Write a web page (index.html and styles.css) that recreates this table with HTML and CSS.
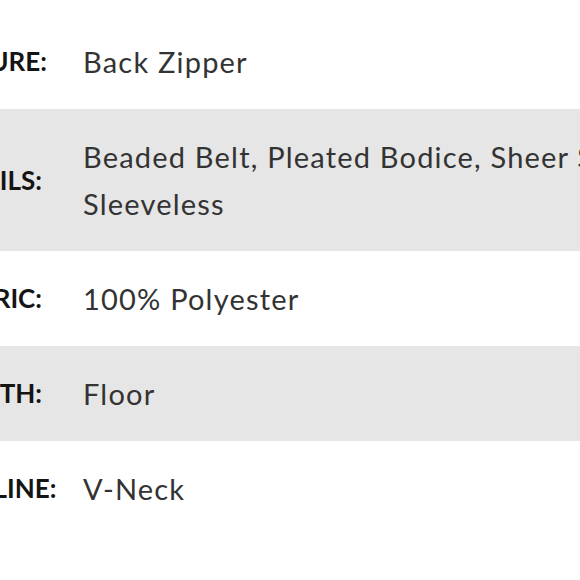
FILE: index.html
```html
<!DOCTYPE html>
<html>
<head>
<meta charset="utf-8">
<link rel="stylesheet" href="styles.css">
</head>
<body>
<div class="specs">
  <div class="spec-row">
    <div class="spec-label">CLOSURE:</div>
    <div class="spec-value">Back Zipper</div>
  </div>
  <div class="spec-row alt">
    <div class="spec-label">DETAILS:</div>
    <div class="spec-value">Beaded Belt, Pleated Bodice, Sheer Straps, Sleeveless</div>
  </div>
  <div class="spec-row">
    <div class="spec-label">FABRIC:</div>
    <div class="spec-value">100% Polyester</div>
  </div>
  <div class="spec-row alt">
    <div class="spec-label">LENGTH:</div>
    <div class="spec-value">Floor</div>
  </div>
  <div class="spec-row">
    <div class="spec-label">NECKLINE:</div>
    <div class="spec-value">V-Neck</div>
  </div>
</div>
</body>
</html>
```
FILE: styles.css
```css
html, body {
  margin: 0;
  padding: 0;
  background: #ffffff;
  overflow: hidden;
  width: 580px;
  height: 580px;
}
.specs {
  margin-top: 14px;
  margin-left: -76px;
  width: 800px;
  font-family: Lato, "Open Sans", sans-serif;
}
.spec-row {
  display: grid;
  grid-template-columns: 118px 1fr;
  column-gap: 41px;
  align-items: center;
  padding: 24px 0;
}
.spec-row.alt {
  background: #e6e6e6;
}
.spec-label {
  font-weight: 700;
  font-size: 26px;
  color: #141414;
  line-height: 47px;
  text-align: right;
  white-space: nowrap;
}
.spec-value {
  font-size: 29px;
  letter-spacing: 1.2px;
  color: #333333;
  line-height: 47px;
  width: 620px;
}
```
